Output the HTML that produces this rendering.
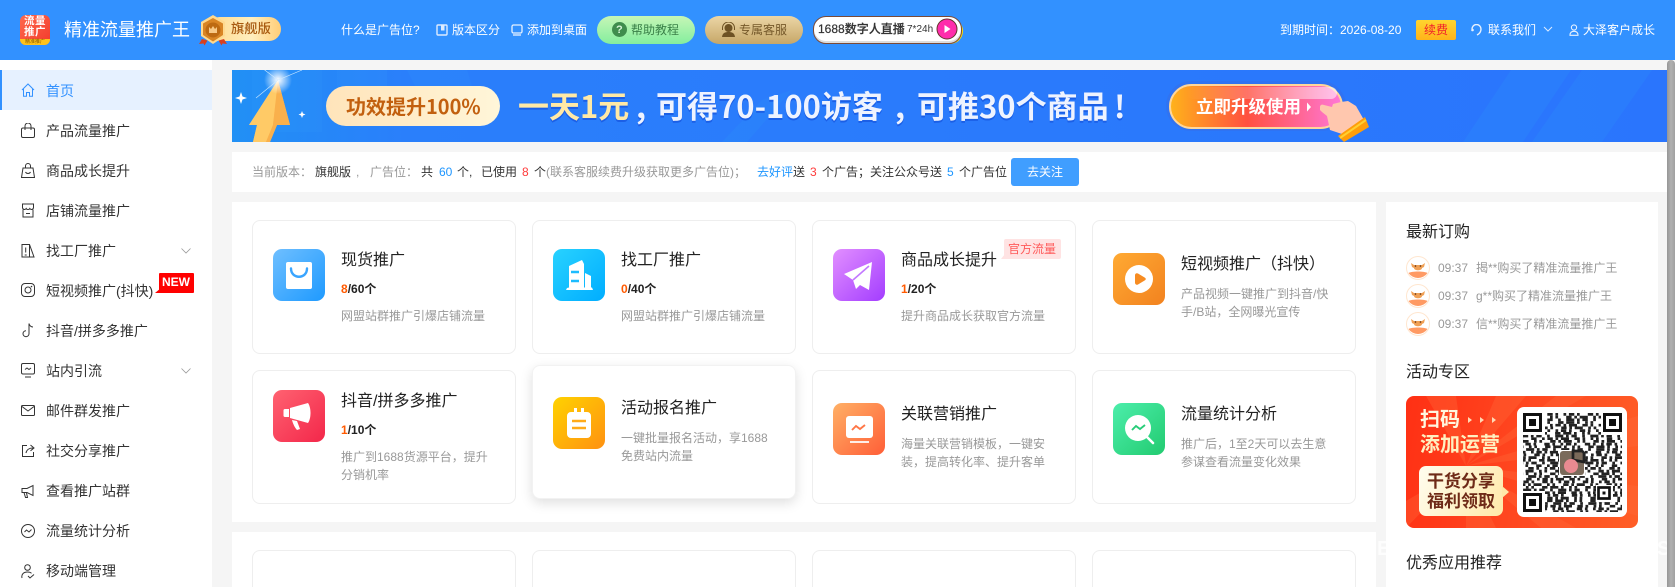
<!DOCTYPE html>
<html lang="zh"><head><meta charset="utf-8"><title>精准流量推广王</title>
<style>
html,body{margin:0;padding:0;background:#f5f5f5;overflow:hidden;width:1675px;height:587px}
#r{position:relative;width:1675px;height:587px;overflow:hidden;background:#f5f5f5;font-family:"Liberation Sans","Noto Sans CJK SC",sans-serif;font-size:12px;color:#333}
#r div,#r span.t,#r svg{position:absolute}
.t{position:absolute;white-space:nowrap;line-height:20px;display:block}
.w{color:#fff}
.m{font-size:14px;left:46px;color:#333}
.ct{font-size:16px;color:#222}
.cn{font-weight:700;color:#222;font-size:12px}
.cn b{color:#ff5a00;font-weight:700}
.d{color:#999;font-size:12px}
.card{border:1px solid #eee;border-radius:8px;background:#fff;width:262px;height:132px;box-sizing:content-box}
.c3{height:36px;border-bottom:0;border-radius:8px 8px 0 0}
.ic{width:52px;height:52px;border-radius:9px}
.ic svg{left:0;top:0}
.g{color:#999}.k{color:#333}.bl{color:#1e96ff}.rd{color:#ff3b3b}
.q path{fill:none;stroke:#222;stroke-width:2.7}
.a{stroke-dasharray:2.7 2.7 5.4 2.7 2.7 8.1 5.4 2.7 2.7 5.4}
.b{stroke-dasharray:5.4 2.7 2.7 2.7 8.1 5.4 2.7 2.7 2.7 8.1}
.c{stroke-dasharray:2.7 5.4 8.1 2.7 2.7 2.7 5.4 5.4}
.e{stroke-dasharray:8.1 2.7 2.7 5.4 2.7 2.7 2.7 8.1 5.4 2.7}
.f{stroke-dasharray:2.7 2.7 2.7 8.1 5.4 5.4 2.7 2.7 5.4}
.big{top:83px;font-family:"Noto Sans CJK SC",sans-serif;font-size:31px;line-height:44px;font-weight:700;color:#eef3ff;text-shadow:0 2px 0 #1b5fe6}
</style></head><body><div id="r">

<!-- header -->
<div style="left:0;top:0;width:1675px;height:60px;background:#3291ff"></div>
<svg style="left:20px;top:15px" width="30" height="30" viewBox="0 0 30 30"><defs><linearGradient id="lg" x1="0" y1="0" x2="1" y2="1"><stop offset="0" stop-color="#ff6a4d"/><stop offset="1" stop-color="#f23a2c"/></linearGradient></defs><rect width="30" height="30" rx="6" fill="url(#lg)"/><path d="M0 24h30v0.5a5.5 5.5 0 0 1-5.5 5.5H5.500A5.500 5.500 0 0 1 0 24.500z" fill="#ffc21a"/></svg>
<span class="t" style="left:24px;top:16px;font-size:10.5px;line-height:11px;width:24px;color:#fff;font-weight:700;white-space:normal;letter-spacing:.5px">流量推广</span>
<span class="t" style="left:25px;top:39px;font-size:5px;line-height:6px;color:#8a5a00">精准推广</span>
<span class="t w" style="left:64px;top:20px;font-size:18px">精准流量推广王</span>
<!-- badge -->
<div style="left:208px;top:17px;width:73px;height:24px;border-radius:12px;background:linear-gradient(90deg,#ffd98a,#ffeebf 60%,#ffcd76)"></div>
<svg style="left:199px;top:14px" width="28" height="32" viewBox="0 0 28 32"><path d="M3 25l-3 5 4.500-.5 1 2 3-5zM25 25l3 5-4.500-.5-1 2-3-5z" fill="#d8401f"/><path d="M14 1l12 7v14l-12 8-12-8V8z" fill="#ffd98e"/><path d="M14 4l10 5.500v11.500l-10 6.500-10-6.500V9.500z" fill="#d98524"/><circle cx="14" cy="16" r="7.500" fill="#bd6a12"/><path d="M10 19v-6l2 2 2-3 2 3 2-2v6z" fill="#f8c986"/></svg>
<span class="t" style="left:231px;top:19px;font-size:13.300px;color:#a85a10;font-weight:500">旗舰版</span>

<span class="t w" style="left:341px;top:20px">什么是广告位?</span>
<svg style="left:436px;top:24px" width="12" height="12" viewBox="0 0 12 12"><rect x="1" y="1" width="10" height="10" rx="1" fill="none" stroke="#dcebff" stroke-width="1.400"/><path d="M5 1.500v5h3.500v-5" fill="#dcebff"/></svg>
<span class="t w" style="left:452px;top:20px">版本区分</span>
<svg style="left:511px;top:24px" width="12" height="12" viewBox="0 0 12 12"><rect x="1" y="1" width="10" height="8" rx="1.500" fill="none" stroke="#e6f1ff" stroke-width="1.300"/><path d="M2 11h8" stroke="#e6f1ff" stroke-width="1.300"/></svg>
<span class="t w" style="left:527px;top:20px">添加到桌面</span>

<div style="left:597px;top:16px;width:98px;height:28px;border-radius:14px;background:linear-gradient(180deg,#c6f6b6,#84ee9e)"></div>
<svg style="left:612px;top:22px" width="15" height="15" viewBox="0 0 15 15"><circle cx="7.500" cy="7.500" r="7.500" fill="#3f8d4d"/></svg>
<span class="t" style="left:616px;top:20px;color:#d8f5d8;font-weight:700;font-size:11px">?</span>
<span class="t" style="left:631px;top:20px;color:#3a8048">帮助教程</span>

<div style="left:705px;top:16px;width:98px;height:28px;border-radius:14px;background:linear-gradient(180deg,#ecd6a6,#c6a768)"></div>
<svg style="left:721px;top:22px" width="15" height="15" viewBox="0 0 15 15"><circle cx="7.500" cy="6" r="4" fill="#6e5224"/><path d="M1 15c.5-4 3-5 6.500-5s6 1 6.500 5z" fill="#6e5224"/><path d="M1.500 8V6a6 6 0 0 1 12 0v2" fill="none" stroke="#6e5224" stroke-width="1"/></svg>
<span class="t" style="left:739px;top:20px;color:#75592a">专属客服</span>

<div style="left:815px;top:18px;width:148px;height:26px;border-radius:13px;background:#ffde00"></div>
<div style="left:813px;top:16px;width:147px;height:26px;border-radius:13px;background:#fff;border:1px solid #7a4a38;box-sizing:content-box;box-shadow:inset 0 -2px 0 #ddd"></div>
<span class="t" style="left:818px;top:19px;color:#333;font-weight:500;font-size:12px;-webkit-text-stroke:.2px #333">1688数字人直播</span>
<span class="t" style="left:907px;top:20px;color:#333;font-size:10px;">7*24h</span>
<svg style="left:936px;top:18px" width="22" height="22" viewBox="0 0 22 22"><circle cx="11" cy="11" r="10" fill="#ff2dac" stroke="#63342a" stroke-width="1"/><path d="M8.500 7l6 4-6 4z" fill="#fff"/></svg>

<span class="t w" style="left:1280px;top:20px">到期时间：2026-08-20</span>
<div style="left:1416px;top:20px;width:40px;height:20px;border-radius:2px;background:linear-gradient(180deg,#ffd52f,#ffb31a)"></div>
<span class="t" style="left:1424px;top:20px;color:#f0202a">续费</span>
<svg style="left:1471px;top:24px" width="12" height="12" viewBox="0 0 12 12"><path d="M1 5a4.500 4.500 0 0 1 9 0c0 3-2 5-4 6" fill="none" stroke="#e6f1ff" stroke-width="1.400"/><circle cx="1.500" cy="6" r="1.300" fill="#e6f1ff"/></svg>
<span class="t w" style="left:1488px;top:20px">联系我们</span>
<svg style="left:1543px;top:26px" width="10" height="7" viewBox="0 0 10 7"><path d="M1 1l4 4 4-4" fill="none" stroke="#dcebff" stroke-width="1"/></svg>
<svg style="left:1569px;top:24px" width="10" height="12" viewBox="0 0 10 12"><circle cx="5" cy="3.500" r="2.600" fill="none" stroke="#e6f1ff" stroke-width="1.100"/><path d="M1 11.300c0-3 1.500-4 4-4s4 1 4 4z" fill="none" stroke="#e6f1ff" stroke-width="1.100"/></svg>
<span class="t w" style="left:1583px;top:20px">大泽客户成长</span>

<!-- sidebar -->
<div style="left:0;top:60px;width:212px;height:527px;background:#fff"></div>
<div style="left:0;top:70px;width:212px;height:40px;background:#e6f1ff"></div>
<div style="left:0;top:70px;width:2px;height:40px;background:#3291ff"></div>
<svg style="left:21px;top:83px" width="14" height="14" viewBox="0 0 14 14"><path d="M1 7l6-6 6 6M2.500 6v7.300h3V9.500h3v3.800h3V6" fill="none" stroke="#3291ff" stroke-width="1"/></svg>
<span class="t m" style="top:81px;color:#3291ff">首页</span>
<svg style="left:21px;top:123px" width="14" height="15" viewBox="0 0 14 15"><rect x=".5" y="5" width="13" height="9.500" rx="1.500" fill="none" stroke="#333"/><path d="M4 7V3a3 3 0 0 1 6 0v4" fill="none" stroke="#333"/></svg>
<span class="t m" style="top:121px">产品流量推广</span>
<svg style="left:21px;top:163px" width="14" height="15" viewBox="0 0 14 15"><path d="M2 5h10l1.500 9.500H.5zM4.500 5V3a2.500 2.500 0 0 1 5 0v2M4.500 9c1 2 4 2 5 0" fill="none" stroke="#333"/></svg>
<span class="t m" style="top:161px">商品成长提升</span>
<svg style="left:21px;top:203px" width="14" height="15" viewBox="0 0 14 15"><path d="M1.500 1h11v3.500a2 2 0 0 1-3.700 1 2.100 2.100 0 0 1-3.600 0 2 2 0 0 1-3.700-1zM2 6.500V14h10V6.500M5 10.500h4" fill="none" stroke="#333"/></svg>
<span class="t m" style="top:201px">店铺流量推广</span>
<svg style="left:21px;top:243px" width="14" height="15" viewBox="0 0 14 15"><path d="M1 14V1.500h7.500L13 14zM8.500 1.500V14M4.700 4.500v5M3.700 12h2" fill="none" stroke="#333"/></svg>
<span class="t m" style="top:241px">找工厂推广</span>
<svg style="left:181px;top:248px" width="10" height="6" viewBox="0 0 10 6"><path d="M.5.500L5 5 9.500.500" fill="none" stroke="#999" stroke-width=".8"/></svg>
<svg style="left:21px;top:283px" width="14" height="14" viewBox="0 0 14 14"><rect x=".5" y=".5" width="13" height="13" rx="3.500" fill="none" stroke="#333"/><circle cx="7" cy="7" r="3" fill="none" stroke="#333"/><circle cx="10.500" cy="3.500" r=".8" fill="#333"/></svg>
<span class="t m" style="top:281px">短视频推广(抖快)</span>
<div style="left:159px;top:273px;width:35px;height:20px;background:#f00;border-radius:1px"></div>
<svg style="left:155px;top:288px" width="6" height="5" viewBox="0 0 6 5"><path d="M0 5h6V0z" fill="#f00"/></svg>
<span class="t w" style="left:162px;top:272px;font-weight:700;font-size:12px">NEW</span>
<svg style="left:22px;top:323px" width="12" height="15" viewBox="0 0 12 15"><path d="M7 .5v10.200a3 3 0 1 1-3-3M7 .5c.300 2 2 3.500 4 3.500" fill="none" stroke="#333"/></svg>
<span class="t m" style="top:321px">抖音/拼多多推广</span>
<svg style="left:21px;top:363px" width="14" height="15" viewBox="0 0 14 15"><rect x=".5" y=".5" width="13" height="10.500" rx="1.500" fill="none" stroke="#333"/><path d="M4 6.500l2-1.500 2 1.500 2-1.500M4 14h6" fill="none" stroke="#333"/></svg>
<span class="t m" style="top:361px">站内引流</span>
<svg style="left:181px;top:368px" width="10" height="6" viewBox="0 0 10 6"><path d="M.5.500L5 5 9.500.500" fill="none" stroke="#999" stroke-width=".8"/></svg>
<svg style="left:21px;top:405px" width="14" height="11" viewBox="0 0 14 11"><rect x=".5" y=".5" width="13" height="10" rx="1" fill="none" stroke="#333"/><path d="M1 1.500l6 4.500 6-4.500" fill="none" stroke="#333"/></svg>
<span class="t m" style="top:401px">邮件群发推广</span>
<svg style="left:21px;top:444px" width="14" height="14" viewBox="0 0 14 14"><path d="M6 1.500H1.500v11h11V8M5 9c.500-3 3-5 7-5M9.500 1L13 4l-3.500 2.800" fill="none" stroke="#333"/></svg>
<span class="t m" style="top:441px">社交分享推广</span>
<svg style="left:21px;top:484px" width="14" height="14" viewBox="0 0 14 14"><path d="M1 4.500h5L12 1.500v10l-6-3H1zM3 8.500l1.500 5h2L5.500 9" fill="none" stroke="#333"/></svg>
<span class="t m" style="top:481px">查看推广站群</span>
<svg style="left:21px;top:524px" width="14" height="14" viewBox="0 0 14 14"><circle cx="7" cy="7" r="6.500" fill="none" stroke="#333"/><path d="M3.500 8l2-2 2.500 2 2.500-2.500" fill="none" stroke="#333"/></svg>
<span class="t m" style="top:521px">流量统计分析</span>
<svg style="left:21px;top:564px" width="14" height="15" viewBox="0 0 14 15"><circle cx="6.500" cy="3.500" r="2.800" fill="none" stroke="#333"/><path d="M1 14c-1-4 2-6 5.500-6 1.500 0 3 .3 4 1.300M7 12l2 2 4-3.500" fill="none" stroke="#333"/></svg>
<span class="t m" style="top:561px">移动端管理</span>

<!-- promo banner -->
<svg style="left:232px;top:70px" width="1435" height="72" viewBox="0 0 1435 72">
<defs>
<linearGradient id="bb" x1="0" y1="0" x2="1" y2="0"><stop offset="0" stop-color="#2190f5"/><stop offset=".12" stop-color="#2a7ffb"/><stop offset="1" stop-color="#2a75fd"/></linearGradient>
<linearGradient id="ar" x1="0" y1="0" x2="1" y2="1"><stop offset="0" stop-color="#ffd98a"/><stop offset="1" stop-color="#f7a83d"/></linearGradient>
<linearGradient id="btn" x1="0" y1="0" x2="1" y2="0"><stop offset="0" stop-color="#ffb31a"/><stop offset=".45" stop-color="#ff5040"/><stop offset="1" stop-color="#ff78d8"/></linearGradient>
<linearGradient id="hl" x1="0" y1="0" x2="1" y2="0"><stop offset="0" stop-color="#fff" stop-opacity="0"/><stop offset=".5" stop-color="#fff" stop-opacity=".25"/><stop offset="1" stop-color="#fff" stop-opacity=".55"/></linearGradient>
<linearGradient id="pl" x1="0" y1="0" x2="1" y2="0"><stop offset="0" stop-color="#ffe4ba"/><stop offset="1" stop-color="#fff6d9"/></linearGradient>
<radialGradient id="gl"><stop offset="0" stop-color="#fff"/><stop offset=".3" stop-color="#fff" stop-opacity=".7"/><stop offset="1" stop-color="#fff" stop-opacity="0"/></radialGradient>
</defs>
<rect width="1435" height="72" fill="url(#bb)"/>
<path d="M20 0h70v62H20zM105 0h50v45h-50zM175 0h60l15 50h-50z" fill="#3aa4ff" opacity=".12"/>
<path d="M490 72L530 30l30-10-45 52zM1231 72l48-72h60l-48 72zM1300 72l50-72h70l-50 72z" fill="#2f97fa" opacity=".22"/>
<path d="M46 10l12 45h-13l-7 17H21l4-17H17z" fill="url(#ar)"/>
<path d="M46 10L17 55h8l-4 17h13l7-17z" fill="#ffca66"/>
<path d="M46 10l12 45H45l-7 17h-4l7-17z" fill="#f9b04c"/>
<circle cx="46" cy="10" r="14" fill="url(#gl)"/>
<path d="M9 22l1.500 4.500L15 28l-4.500 1.500L9 34l-1.500-4.500L3 28l4.500-1.500zM70 41l1 2.500 2.500 1-2.500 1-1 2.500-1-2.500-2.500-1 2.500-1z" fill="#fff"/>
<path d="M30 -2L46 10l24-10M46 10L24 28" stroke="#cfeaff" stroke-width=".6" fill="none"/>
<rect x="94" y="16" width="174" height="40" rx="20" fill="url(#pl)"/>
<rect x="934" y="11" width="180" height="50" rx="25" fill="#3b6bdc" opacity=".35"/>
<rect x="938" y="15" width="172" height="43" rx="21.500" fill="url(#btn)" stroke="#ffd69a" stroke-width="2"/>
<rect x="955" y="17" width="150" height="12" rx="6" fill="url(#hl)"/>
<path d="M1075 32.500l4 4.500-4 4.500z" fill="#fff"/>
<path d="M1088 37c0-2 2-3 4-2l8 2 1-3 8-2 7-1 8 5 8 14-22 14-12-4-3-14-5-4-2-2z" fill="#ffc7ae"/>
<path d="M1106 66l27-19 4 10-25 15z" fill="#ff9e0a"/>
<path d="M1108 68l26-18" stroke="#ffd030" stroke-width="2" fill="none"/>
</svg>
<span class="t" style="left:346px;top:94px;font-family:'Noto Sans CJK SC',sans-serif;font-size:20px;line-height:24px;font-weight:700;color:#c2600f">功效提升100%</span>
<span class="t big" style="left:518px;color:#ffe9a6">一天1元</span>
<span class="t big" style="left:636px">,</span>
<span class="t big" style="left:656px">可得70-100访客</span>
<span class="t big" style="left:895px">,</span>
<span class="t big" style="left:917px">可推30个商品</span>
<span class="t big" style="left:1114px">!</span>
<span class="t w" style="left:1196px;top:94px;font-size:17.500px;line-height:26px;font-weight:700">立即升级使用</span>

<!-- info bar -->
<div style="left:232px;top:152px;width:1435px;height:40px;background:#fff"></div>
<span class="t g" style="left:252px;top:162px">当前版本：</span>
<span class="t k" style="left:315px;top:162px">旗舰版</span>
<span class="t g" style="left:356px;top:162px">,</span>
<span class="t g" style="left:370px;top:162px">广告位：</span>
<span class="t k" style="left:421px;top:162px">共</span>
<span class="t bl" style="left:439px;top:162px">60</span>
<span class="t k" style="left:457px;top:162px">个,</span>
<span class="t k" style="left:481px;top:162px">已使用</span>
<span class="t rd" style="left:522px;top:162px">8</span>
<span class="t k" style="left:534px;top:162px">个</span>
<span class="t g" style="left:546px;top:162px">(联系客服续费升级获取更多广告位)；</span>
<span class="t bl" style="left:757px;top:162px">去好评</span>
<span class="t k" style="left:793px;top:162px">送</span>
<span class="t rd" style="left:810px;top:162px">3</span>
<span class="t k" style="left:822px;top:162px">个广告；关注公众号送</span>
<span class="t bl" style="left:947px;top:162px">5</span>
<span class="t k" style="left:959px;top:162px">个广告位</span>
<div style="left:1011px;top:158px;width:68px;height:28px;border-radius:3px;background:#409eff"></div>
<span class="t w" style="left:1027px;top:162px">去关注</span>

<!-- main panels -->
<div style="left:232px;top:202px;width:1144px;height:320px;background:#fff"></div>
<div style="left:232px;top:532px;width:1144px;height:55px;background:#fff"></div>

<!-- row 1 -->
<div class="card" style="left:252px;top:220px"></div>
<div class="card" style="left:532px;top:220px"></div>
<div class="card" style="left:812px;top:220px"></div>
<div class="card" style="left:1092px;top:220px"></div>
<!-- row 2 -->
<div class="card" style="left:252px;top:370px"></div>
<div class="card" style="left:532px;top:365px;border-color:#f2f2f2;box-shadow:0 4px 12px rgba(0,0,0,.13)"></div>
<div class="card" style="left:812px;top:370px"></div>
<div class="card" style="left:1092px;top:370px"></div>
<!-- row 3 -->
<div class="card c3" style="left:252px;top:550px"></div>
<div class="card c3" style="left:532px;top:550px"></div>
<div class="card c3" style="left:812px;top:550px"></div>
<div class="card c3" style="left:1092px;top:550px"></div>

<!-- card 1 -->
<div class="ic" style="left:273px;top:249px;background:linear-gradient(135deg,#6fbfff,#1e9aff)"><svg width="52" height="52" viewBox="0 0 52 52"><rect x="13" y="13" width="26" height="27" rx="2" fill="#fff"/><path d="M18 19.500c0 11 16 11 16 0" fill="none" stroke="#3aa5ff" stroke-width="2.400" stroke-linecap="round"/></svg></div>
<span class="t ct" style="left:341px;top:251px">现货推广</span>
<span class="t cn" style="left:341px;top:279px"><b>8</b>/60个</span>
<span class="t d" style="left:341px;top:306px">网盟站群推广引爆店铺流量</span>
<!-- card 2 -->
<div class="ic" style="left:553px;top:249px;background:linear-gradient(135deg,#28d2ff,#00adff)"><svg width="52" height="52" viewBox="0 0 52 52"><path d="M13 41l1-2 2-.5V17l13-6 2 4v23.500h1V24l6 3v11.500h1l1 2.500z" fill="#fff"/><path d="M18 23h8M18 32h8" stroke="#1cbcff" stroke-width="2.400"/></svg></div>
<span class="t ct" style="left:621px;top:251px">找工厂推广</span>
<span class="t cn" style="left:621px;top:279px"><b>0</b>/40个</span>
<span class="t d" style="left:621px;top:306px">网盟站群推广引爆店铺流量</span>
<!-- card 3 -->
<div class="ic" style="left:833px;top:249px;background:linear-gradient(135deg,#e28fff,#a33dff)"><svg width="52" height="52" viewBox="0 0 52 52"><path d="M39 13l-3 28-9-5-4 4-3-9-9-6z" fill="#fff"/><path d="M36 17L20 31" stroke="#c278ff" stroke-width="1.600" fill="none"/></svg></div>
<span class="t ct" style="left:901px;top:251px">商品成长提升</span>
<span class="t cn" style="left:901px;top:279px"><b>1</b>/20个</span>
<span class="t d" style="left:901px;top:306px">提升商品成长获取官方流量</span>
<div style="left:1004px;top:239px;width:57px;height:20px;background:#ffe3e3;border-radius:2px 2px 2px 0"></div>
<svg style="left:1001px;top:254px" width="4" height="5" viewBox="0 0 4 5"><path d="M0 5h4V0z" fill="#ffe3e3"/></svg>
<span class="t" style="left:1008px;top:239px;color:#ff5a5a">官方流量</span>
<!-- card 4 -->
<div class="ic" style="left:1113px;top:253px;background:linear-gradient(135deg,#ffaa33,#f2821f)"><svg width="52" height="52" viewBox="0 0 52 52"><circle cx="26" cy="26" r="14" fill="#fff"/><path d="M22 22a2 2 0 0 1 3-1.500l7 4.200a1.500 1.500 0 0 1 0 2.600l-7 4.200a2 2 0 0 1-3-1.500z" fill="#f78c22"/></svg></div>
<span class="t ct" style="left:1181px;top:255px">短视频推广（抖快）</span>
<span class="t d" style="left:1181px;top:284px">产品视频一键推广到抖音/快</span>
<span class="t d" style="left:1181px;top:302px">手/B站，全网曝光宣传</span>
<!-- card 5 -->
<div class="ic" style="left:273px;top:390px;background:linear-gradient(135deg,#ff6271,#f3274a)"><svg width="52" height="52" viewBox="0 0 52 52"><path d="M12 19h4v8h-4a1.500 1.500 0 0 1-1.500-1.500v-5A1.500 1.500 0 0 1 12 19z" fill="#fff"/><path d="M17 18l18-5c2 3 2.500 7 2.500 10s-.5 7-2.500 10L17 28z" fill="#fff"/><path d="M19 30l5 1 3 8-3 1c-2-2-4-6-5-10z" fill="#fff"/></svg></div>
<span class="t ct" style="left:341px;top:392px">抖音/拼多多推广</span>
<span class="t cn" style="left:341px;top:420px"><b>1</b>/10个</span>
<span class="t d" style="left:341px;top:447px">推广到1688货源平台，提升</span>
<span class="t d" style="left:341px;top:465px">分销机率</span>
<!-- card 6 -->
<div class="ic" style="left:553px;top:397px;background:linear-gradient(135deg,#ffd200,#ff9111)"><svg width="52" height="52" viewBox="0 0 52 52"><path d="M18 15h3v-4h3v4h4v-4h3v4h3a4 4 0 0 1 4 4v18a4 4 0 0 1-4 4H18a4 4 0 0 1-4-4V19a4 4 0 0 1 4-4z" fill="#fff"/><path d="M19 24h14M19 31h14" stroke="#ffab1a" stroke-width="2.400"/></svg></div>
<span class="t ct" style="left:621px;top:399px">活动报名推广</span>
<span class="t d" style="left:621px;top:428px">一键批量报名活动，享1688</span>
<span class="t d" style="left:621px;top:446px">免费站内流量</span>
<!-- card 7 -->
<div class="ic" style="left:833px;top:403px;background:linear-gradient(135deg,#ffb066,#ff5e37)"><svg width="52" height="52" viewBox="0 0 52 52"><rect x="13" y="13" width="27" height="22" rx="3" fill="#fff"/><path d="M19 27l4-4 4 3 5-4" fill="none" stroke="#ff7646" stroke-width="1.900"/><path d="M17 39h19" stroke="#fff" stroke-width="1.800"/></svg></div>
<span class="t ct" style="left:901px;top:405px">关联营销推广</span>
<span class="t d" style="left:901px;top:434px">海量关联营销模板，一键安</span>
<span class="t d" style="left:901px;top:452px">装，提高转化率、提升客单</span>
<!-- card 8 -->
<div class="ic" style="left:1113px;top:403px;background:linear-gradient(135deg,#4ceeab,#22cb70)"><svg width="52" height="52" viewBox="0 0 52 52"><circle cx="25" cy="25" r="13" fill="#fff"/><path d="M34 34l6 6" stroke="#fff" stroke-width="2.600" stroke-linecap="round"/><path d="M19 27l4-4 4 3 5-4" fill="none" stroke="#27cd78" stroke-width="1.900"/></svg></div>
<span class="t ct" style="left:1181px;top:405px">流量统计分析</span>
<span class="t d" style="left:1181px;top:434px">推广后，1至2天可以去生意</span>
<span class="t d" style="left:1181px;top:452px">参谋查看流量变化效果</span>

<!-- right panel -->
<span class="t w" style="left:1377px;top:537px;font-size:20px;line-height:24px;font-weight:700;opacity:.8">E</span>
<span class="t w" style="left:1657px;top:537px;font-size:20px;line-height:24px;font-weight:700;opacity:.8">S</span>
<div style="left:1386px;top:202px;width:272px;height:385px;background:#fff"></div>
<span class="t ct" style="left:1406px;top:223px">最新订购</span>

<svg style="left:1406px;top:256px" width="24" height="24" viewBox="0 0 24 24"><circle cx="12" cy="12" r="11.500" fill="#fff" stroke="#ffe6cf"/><path d="M2.500 17c3-2 16-2 19 0a11.500 11.500 0 0 1-19 0z" fill="#ff9a63"/><path d="M5 7l3 2h8l3-2-1 4-2 1c0 3-8 3-8 0l-2-1z" fill="#f0a055"/><circle cx="9.500" cy="10" r=".8" fill="#5a2c10"/><circle cx="14.500" cy="10" r=".8" fill="#5a2c10"/></svg>
<span class="t g" style="left:1438px;top:258px">09:37</span>
<span class="t g" style="left:1476px;top:258px">揭**购买了精准流量推广王</span>
<svg style="left:1406px;top:284px" width="24" height="24" viewBox="0 0 24 24"><circle cx="12" cy="12" r="11.500" fill="#fff" stroke="#ffe6cf"/><path d="M2.500 17c3-2 16-2 19 0a11.500 11.500 0 0 1-19 0z" fill="#ff9a63"/><path d="M5 7l3 2h8l3-2-1 4-2 1c0 3-8 3-8 0l-2-1z" fill="#f0a055"/><circle cx="9.500" cy="10" r=".8" fill="#5a2c10"/><circle cx="14.500" cy="10" r=".8" fill="#5a2c10"/></svg>
<span class="t g" style="left:1438px;top:286px">09:37</span>
<span class="t g" style="left:1476px;top:286px">g**购买了精准流量推广王</span>
<svg style="left:1406px;top:312px" width="24" height="24" viewBox="0 0 24 24"><circle cx="12" cy="12" r="11.500" fill="#fff" stroke="#ffe6cf"/><path d="M2.500 17c3-2 16-2 19 0a11.500 11.500 0 0 1-19 0z" fill="#ff9a63"/><path d="M5 7l3 2h8l3-2-1 4-2 1c0 3-8 3-8 0l-2-1z" fill="#f0a055"/><circle cx="9.500" cy="10" r=".8" fill="#5a2c10"/><circle cx="14.500" cy="10" r=".8" fill="#5a2c10"/></svg>
<span class="t g" style="left:1438px;top:314px">09:37</span>
<span class="t g" style="left:1476px;top:314px">信**购买了精准流量推广王</span>

<span class="t ct" style="left:1406px;top:363px">活动专区</span>
<!-- activity card -->
<div style="left:1406px;top:396px;width:232px;height:132px;border-radius:8px;overflow:hidden;background:linear-gradient(100deg,#ff3014,#ff4c22 60%,#ff5e26)">
<svg style="left:0;top:0" width="232" height="132" viewBox="0 0 232 132"><path d="M60 70L20 0h30zM60 70L90 0h30zM60 70L150 0h30zM60 70L232 20v30zM60 70L232 90v30zM60 70L170 132h-35zM60 70L90 132H60zM60 70L0 132V105z" fill="#ff6a3a" opacity=".35"/></svg>
</div>
<span class="t" style="left:1420px;top:408px;font-size:20px;line-height:24px;font-weight:700;color:#fff7df">扫码</span>
<svg style="left:1468px;top:415px" width="30" height="10" viewBox="0 0 30 10"><path d="M0 2l4 3-4 3zM12 2l4 3-4 3zM24 2l4 3-4 3z" fill="#ffd9b4"/></svg>
<span class="t" style="left:1420px;top:433px;font-size:20px;line-height:24px;font-weight:700;color:#fff0c0">添加运营</span>
<div style="left:1419px;top:466px;width:84px;height:50px;border-radius:7px;background:linear-gradient(120deg,#fffdf0,#ffe9a8)"></div>
<svg style="left:1502px;top:486px" width="7" height="12" viewBox="0 0 7 12"><path d="M0 0l7 6-7 6z" fill="#ffe9a8"/></svg>
<span class="t" style="left:1427px;top:471px;font-size:17px;line-height:22px;font-weight:700;color:#6e2a17">干货分享</span>
<span class="t" style="left:1427px;top:491px;font-size:17px;line-height:22px;font-weight:700;color:#6e2a17">福利领取</span>
<div style="left:1517px;top:407px;width:110px;height:110px;border-radius:7px;background:#fff"></div>
<svg class="q" style="left:1523px;top:413px" width="99" height="99" viewBox="0 0 99 99">
<path class="a" d="M0 1.400h99"/><path class="b" d="M0 4.100h99"/><path class="c" d="M0 6.800h99"/><path class="e" d="M0 9.500h99"/><path class="f" d="M0 12.200h99"/><path class="b" style="stroke-dashoffset:5" d="M0 14.900h99"/><path class="a" style="stroke-dashoffset:8" d="M0 17.600h99"/><path class="e" style="stroke-dashoffset:3" d="M0 20.300h99"/><path class="c" style="stroke-dashoffset:11" d="M0 23h99"/><path class="f" style="stroke-dashoffset:8" d="M0 25.700h99"/><path class="b" style="stroke-dashoffset:16" d="M0 28.400h99"/><path class="a" style="stroke-dashoffset:3" d="M0 31.100h99"/><path class="e" style="stroke-dashoffset:13" d="M0 33.800h99"/><path class="c" style="stroke-dashoffset:5" d="M0 36.500h99"/><path class="f" style="stroke-dashoffset:19" d="M0 39.200h99"/><path class="a" style="stroke-dashoffset:13" d="M0 41.900h99"/><path class="b" style="stroke-dashoffset:8" d="M0 44.600h99"/><path class="e" style="stroke-dashoffset:19" d="M0 47.300h99"/><path class="c" style="stroke-dashoffset:16" d="M0 50h99"/><path class="f" style="stroke-dashoffset:3" d="M0 52.700h99"/><path class="a" style="stroke-dashoffset:19" d="M0 55.400h99"/><path class="b" style="stroke-dashoffset:11" d="M0 58.100h99"/><path class="e" style="stroke-dashoffset:8" d="M0 60.800h99"/><path class="c" style="stroke-dashoffset:3" d="M0 63.500h99"/><path class="f" style="stroke-dashoffset:13" d="M0 66.200h99"/><path class="a" style="stroke-dashoffset:5" d="M0 68.900h99"/><path class="b" style="stroke-dashoffset:3" d="M0 71.600h99"/><path class="e" style="stroke-dashoffset:16" d="M0 74.300h99"/><path class="c" style="stroke-dashoffset:8" d="M0 77h99"/><path class="f" style="stroke-dashoffset:11" d="M0 79.700h99"/><path class="a" style="stroke-dashoffset:16" d="M0 82.400h99"/><path class="b" style="stroke-dashoffset:19" d="M0 85.100h99"/><path class="e" style="stroke-dashoffset:11" d="M0 87.800h99"/><path class="c" style="stroke-dashoffset:13" d="M0 90.500h99"/><path class="f" style="stroke-dashoffset:5" d="M0 93.200h99"/><path class="a" style="stroke-dashoffset:11" d="M0 95.900h99"/><path class="b" style="stroke-dashoffset:13" d="M0 98.600h99"/>
<rect x="0" y="0" width="22" height="22" fill="#fff"/><rect x="78" y="0" width="21" height="22" fill="#fff"/><rect x="0" y="78" width="22" height="21" fill="#fff"/><rect x="73" y="72" width="17" height="17" fill="#fff"/><rect x="36" y="37" width="26" height="26" fill="#fff"/>
<rect x="1.500" y="1.500" width="16" height="16" fill="#fff" stroke="#111" stroke-width="3"/><rect x="6" y="6" width="7" height="7" fill="#111"/>
<rect x="81.500" y="1.500" width="16" height="16" fill="#fff" stroke="#111" stroke-width="3"/><rect x="86" y="6" width="7" height="7" fill="#111"/>
<rect x="1.500" y="81.500" width="16" height="16" fill="#fff" stroke="#111" stroke-width="3"/><rect x="6" y="86" width="7" height="7" fill="#111"/>
<rect x="75.500" y="74.500" width="11" height="11" fill="#fff" stroke="#111" stroke-width="2.700"/><rect x="79.500" y="78.500" width="3" height="3" fill="#111"/>
<rect x="37" y="38" width="24" height="24" rx="3" fill="#7a6a5a"/><path d="M50 38h8a3 3 0 0 1 3 3v8l-11-2z" fill="#c9c0a8"/><circle cx="48" cy="53" r="7" fill="#e88a90"/>
</svg>
<span class="t ct" style="left:1406px;top:554px">优秀应用推荐</span>

<!-- scrollbar -->
<div style="left:1667px;top:60px;width:8px;height:527px;border-radius:4px 4px 0 0;background:linear-gradient(90deg,#969696,#b0b0b0 50%,#a0a0a0)"></div>
</div></body></html>
